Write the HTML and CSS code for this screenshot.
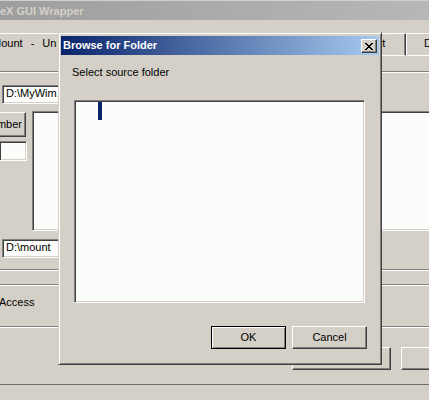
FILE: index.html
```html
<!DOCTYPE html>
<html>
<head>
<meta charset="utf-8">
<title>Browse for Folder</title>
<link rel="stylesheet" href="styles.css">
</head>
<body>
<div class="app">
  <div class="app-title">eX GUI Wrapper</div>
  <div class="tabs">
    <div class="tab sel"><span class="tab-clip">Mount - Unmount</span></div>
    <div class="tab t2"></div>
    <div class="tab t3"></div>
    <div class="tab t4">Export</div>
    <div class="tab t5">Delete</div>
  </div>
  <div class="panel">
    <div class="etch first"></div>
    <div class="field f-wim">D:\MyWim.</div>
    <div class="row2">
      <div class="leftcol">
        <div class="rbtn cut"><span>mber</span></div>
        <div class="field f-small"></div>
      </div>
      <div class="field list"></div>
    </div>
    <div class="field f-mount">D:\mount</div>
    <div class="etch e1"></div>
    <div class="etch e2"></div>
    <div class="access">Access</div>
    <div class="etch e3"></div>
    <div class="bgbuttons">
      <div class="rbtn b1"></div>
      <div class="rbtn b2"></div>
    </div>
    <div class="bottomline"></div>
  </div>
</div>

<div class="dlg">
  <div class="dlg-title">
    <span class="dlg-caption">Browse for Folder</span>
    <div class="close">
      <svg width="8" height="7" viewBox="0 0 8 7" shape-rendering="crispEdges"><path d="M0 0h2v1H0zM6 0h2v1H6zM1 1h2v1H1zM5 1h2v1H5zM2 2h4v1H2zM3 3h2v1H3zM2 4h4v1H2zM1 5h2v1H1zM5 5h2v1H5zM0 6h2v1H0zM6 6h2v1H6z" fill="#000"/></svg>
    </div>
  </div>
  <div class="dlg-label">Select source folder</div>
  <div class="tree"><div class="tree-sel"></div></div>
  <div class="dlg-buttons">
    <button class="btn default">OK</button>
    <button class="btn">Cancel</button>
  </div>
</div>
</body>
</html>
```
FILE: styles.css
```css
* { box-sizing: border-box; margin: 0; padding: 0; }
html, body { width: 429px; height: 400px; overflow: hidden; }
body {
  background: #d4d0c8;
  font: 11px/13px "Liberation Sans", Arial, sans-serif;
  color: #000;
  position: relative;
}

/* background application window */
.app { width: 480px; }
.app-title {
  height: 20px;
  border-top: 1px solid #d0d0d0;
  background: linear-gradient(to right, #9e9e9e, #bababa);
  color: #d4d0c8;
  font-weight: bold;
  padding-top: 4px;
  white-space: nowrap;
}
.tabs { display: flex; margin-top: 13px; height: 23px; white-space: nowrap; }
.tab {
  flex: none;
  height: 23px;
  border-top: 1px solid #fff;
  border-left: 1px solid #fff;
  border-right: 1px solid #404040;
  border-bottom: 1px solid #fff;
  box-shadow: inset -1px 0 #808080;
  padding-top: 3px;
  text-align: center;
  overflow: hidden;
}
.tab.sel { width: 114px; border-left: none; border-bottom: none; text-align: left; }
.tab-clip {
  display: inline-block;
  vertical-align: top;
  margin-left: -8px;
  width: 65px;
  overflow: hidden;
  white-space: nowrap;
  word-spacing: 5px;
}
.t2 { width: 157px; }
.t3 { width: 66px; }
.t4 { width: 69px; padding-right: 4px; }
.t5 { width: 68px; }

.etch { height: 2px; border-top: 1px solid #808080; border-bottom: 1px solid #fff; }
.etch.first { margin-top: 15px; }
.etch.e1 { margin-top: 11px; }
.etch.e2 { margin-top: 13px; }
.etch.e3 { margin-top: 17px; }

.field {
  background: #fcfdfa;
  border: 1px solid;
  border-color: #808080 #fff #fff #808080;
  box-shadow: inset 1px 1px #404040, inset -1px -1px #d4d0c8;
  padding: 1px 0 0 3px;
  white-space: nowrap;
  overflow: hidden;
}
.f-wim { margin: 12px 0 0 2px; width: 150px; height: 19px; }
.row2 { display: flex; align-items: flex-start; margin-top: 7px; }
.leftcol { width: 32px; flex: none; display: flex; flex-direction: column; }
.rbtn {
  background: #d4d0c8;
  border: 1px solid;
  border-color: #fff #404040 #404040 #fff;
  box-shadow: inset -1px -1px #808080;
}
.rbtn.cut {
  margin-top: 1px;
  width: 26px;
  height: 25px;
  border-left: none;
  display: flex;
  justify-content: flex-end;
  align-items: center;
  padding-right: 3px;
  overflow: hidden;
  white-space: nowrap;
}
.rbtn.cut span { flex: none; }
.f-small { margin-top: 4px; width: 27px; height: 20px; border-left: none; }
.list { width: 420px; height: 120px; flex: none; }
.f-mount { margin: 8px 0 0 2px; width: 150px; height: 19px; }
.access { margin-top: 10px; text-indent: -1px; }
.bgbuttons { display: flex; gap: 10px; margin-top: 19px; padding-left: 292px; }
.rbtn.b1 { width: 100px; height: 23px; }
.rbtn.b2 { width: 80px; height: 23px; }
.bottomline { margin-top: 14px; border-top: 1px solid #6e6e6e; }

/* Browse for Folder dialog (window on top) */
.dlg {
  position: absolute;
  left: 58px;
  top: 32px;
  width: 324px;
  height: 333px;
  background: #d4d0c8;
  border: 1px solid;
  border-color: #d4d0c8 #404040 #404040 #d4d0c8;
  box-shadow: inset 1px 1px #fff, inset -1px -1px #808080;
  padding: 3px 2px 2px 2px;
  display: flex;
  flex-direction: column;
}
.dlg-title {
  height: 19px;
  flex: none;
  background: linear-gradient(to right, #0a246a, #a6caf0);
  display: flex;
  align-items: flex-start;
  padding: 0 2px;
  color: #fff;
  font-weight: bold;
}
.dlg-caption { flex: 1; margin-top: 3px; white-space: nowrap; }
.close {
  margin-top: 3px;
  width: 16px;
  height: 14px;
  background: #d4d0c8;
  border: 1px solid;
  border-color: #fff #404040 #404040 #fff;
  box-shadow: inset -1px -1px #808080;
  display: flex;
  align-items: center;
  justify-content: center;
}
.close svg { display: block; }
.dlg-label { margin: 11px 0 0 11px; }
.tree {
  margin: 21px 0 0 13px;
  width: 291px;
  height: 203px;
  flex: none;
  background: #fbfdfa;
  border: 1px solid;
  border-color: #808080 #fff #fff #808080;
  box-shadow: inset 1px 1px #404040, inset -1px -1px #d4d0c8;
  padding: 1px;
}
.tree-sel { width: 4px; height: 18px; margin-left: 22px; background: #0a246a; }
.dlg-buttons { margin-top: 23px; display: flex; justify-content: flex-end; gap: 6px; padding-right: 12px; }
.btn {
  width: 75px;
  height: 23px;
  font: 11px/13px "Liberation Sans", Arial, sans-serif;
  color: #000;
  background: #d4d0c8;
  border: 1px solid;
  border-color: #fff #404040 #404040 #fff;
  box-shadow: inset -1px -1px #808080;
  padding: 0;
  outline: none;
}
.btn.default {
  border-color: #000;
  box-shadow: inset 1px 1px #fff, inset -1px -1px #808080;
}
```
